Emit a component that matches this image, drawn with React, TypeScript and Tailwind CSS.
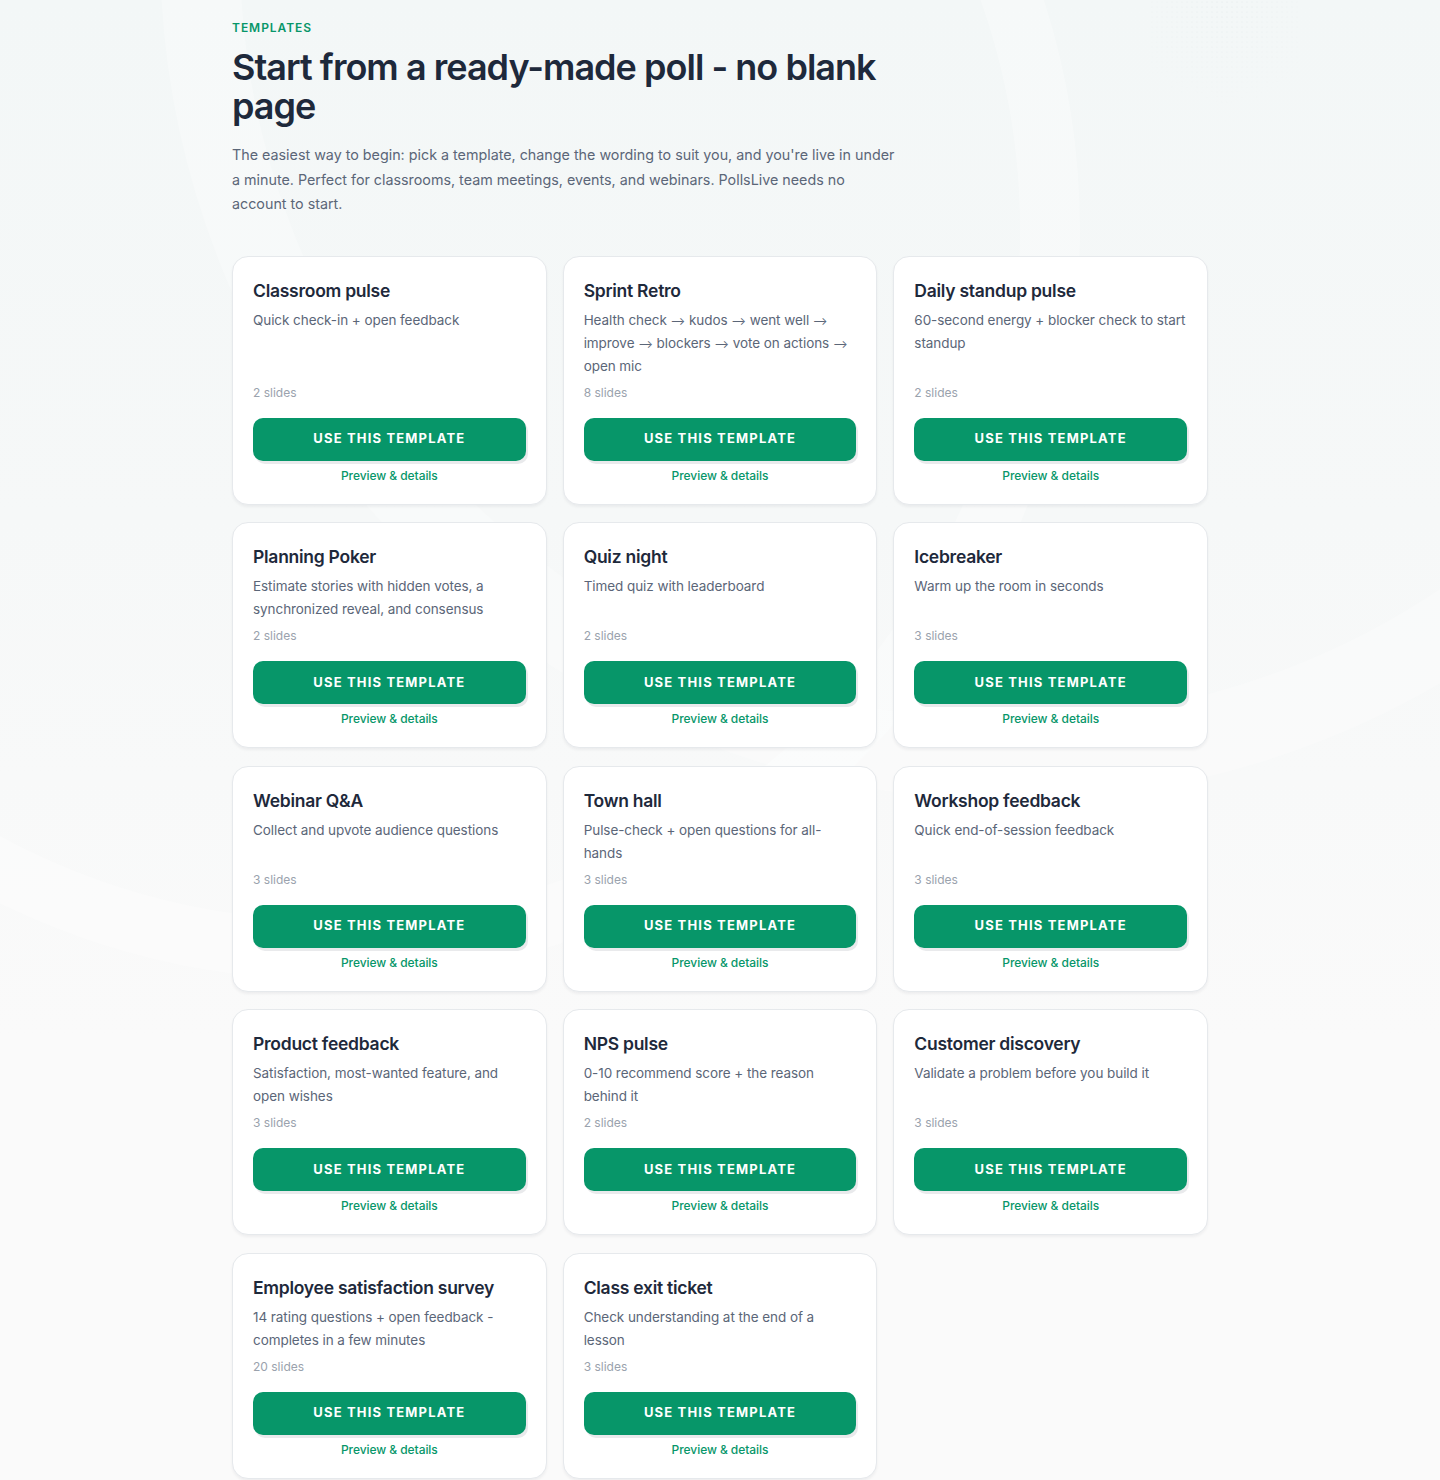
import React from "react";

type Template = {
	title: string;
	description: string;
	slides: number;
};

const templates: Template[] = [
	{ title: "Classroom pulse", description: "Quick check-in + open feedback", slides: 2 },
	{
		title: "Sprint Retro",
		description:
			"Health check \u27F6 kudos \u27F6 went well \u27F6 improve \u27F6 blockers \u27F6 vote on actions \u27F6 open mic",
		slides: 8,
	},
	{
		title: "Daily standup pulse",
		description: "60-second energy + blocker check to start standup",
		slides: 2,
	},
	{
		title: "Planning Poker",
		description: "Estimate stories with hidden votes, a synchronized reveal, and consensus",
		slides: 2,
	},
	{ title: "Quiz night", description: "Timed quiz with leaderboard", slides: 2 },
	{ title: "Icebreaker", description: "Warm up the room in seconds", slides: 3 },
	{ title: "Webinar Q&A", description: "Collect and upvote audience questions", slides: 3 },
	{ title: "Town hall", description: "Pulse-check + open questions for all-hands", slides: 3 },
	{ title: "Workshop feedback", description: "Quick end-of-session feedback", slides: 3 },
	{
		title: "Product feedback",
		description: "Satisfaction, most-wanted feature, and open wishes",
		slides: 3,
	},
	{ title: "NPS pulse", description: "0-10 recommend score + the reason behind it", slides: 2 },
	{
		title: "Customer discovery",
		description: "Validate a problem before you build it",
		slides: 3,
	},
	{
		title: "Employee satisfaction survey",
		description: "14 rating questions + open feedback - completes in a few minutes",
		slides: 20,
	},
	{
		title: "Class exit ticket",
		description: "Check understanding at the end of a lesson",
		slides: 3,
	},
];

// long arrows read a touch smaller in the source font
function Description({ text }: { text: string }) {
	const parts = text.split("\u27F6");
	return (
		<>
			{parts.map((part, i) => (
				<React.Fragment key={i}>
					{part}
					{i < parts.length - 1 && (
						<span className="text-[11px] leading-none">{"\u27F6"}</span>
					)}
				</React.Fragment>
			))}
		</>
	);
}

function TemplateCard({ template }: { template: Template }) {
	return (
		<div className="flex flex-col rounded-2xl border border-[#e6e9ec] bg-white p-5 shadow-[0_2px_3px_rgba(15,23,42,0.05)]">
			{/* Text */}
			<h3 className="text-[17.5px] leading-7 font-semibold tracking-[-0.015em] text-[#1e293b]">
				{template.title}
			</h3>
			<p className="mt-1 flex-1 text-[13.5px] leading-[23px] tracking-[-0.005em] text-[#5b6678]">
				<Description text={template.description} />
			</p>
			<p className="mt-[7px] text-[12px] leading-4 text-[#9aa2ad]">
				{template.slides} slides
			</p>

			{/* Actions */}
			<button
				type="button"
				className="mt-[17px] h-[43px] w-full rounded-[10px] bg-[#079669] text-[13px] font-bold tracking-[0.09em] text-white shadow-[2px_3px_0_rgba(15,23,42,0.09)]"
			>
				USE THIS TEMPLATE
			</button>
			<a
				href="#"
				className="mt-[7px] block text-center text-[12px] leading-4 font-medium tracking-[-0.005em] text-[#079669]"
			>
				Preview &amp; details
			</a>
		</div>
	);
}

export default function App() {
	return (
		<div
			className="relative min-h-[1480px] overflow-hidden bg-[linear-gradient(180deg,#f3f7f7_0%,#f6f8f8_35%,#fafafa_70%,#fafafa_100%)]"
			style={{ fontFamily: "Inter, 'Noto Sans', sans-serif" }}
		>
			{/* Background decoration */}
			<div className="pointer-events-none absolute inset-0">
				<div className="absolute -left-[420px] -top-[520px] h-[1500px] w-[1500px] rounded-full border-[60px] border-white/30" />
				<div className="absolute left-[160px] -top-[900px] h-[1700px] w-[1700px] rounded-full border-[80px] border-white/25" />
				<svg
					className="absolute left-[1150px] top-0 h-[150px] w-[150px] opacity-50"
					viewBox="0 0 150 150"
				>
					<defs>
						<pattern id="dots" width="5" height="5" patternUnits="userSpaceOnUse">
							<circle cx="2" cy="2" r="0.6" fill="#cbd5d8" />
						</pattern>
						<radialGradient id="fade" cx="50%" cy="0%" r="70%">
							<stop offset="0%" stopColor="white" stopOpacity="1" />
							<stop offset="100%" stopColor="white" stopOpacity="0" />
						</radialGradient>
						<mask id="m">
							<rect width="150" height="150" fill="url(#fade)" />
						</mask>
					</defs>
					<rect width="150" height="150" fill="url(#dots)" mask="url(#m)" />
				</svg>
			</div>

			<div className="relative mx-auto w-[976px] pt-5 pb-1">
				{/* Header */}
				<p className="text-[12px] leading-4 font-semibold tracking-[0.08em] text-[#079669]">
					TEMPLATES
				</p>
				<h1 className="mt-[12px] max-w-[672px] text-[36px] leading-[39px] font-semibold tracking-[-0.027em] text-[#1e293b]">
					Start from a ready-made poll - no blank page
				</h1>
				<p className="mt-[17px] max-w-[666px] text-[14.3px] leading-[24.5px] text-[#5b6678]">
					The easiest way to begin: pick a template, change the wording to suit you, and
					you're live in under a minute. Perfect for classrooms, team meetings, events,
					and webinars. PollsLive needs no account to start.
				</p>

				{/* Grid */}
				<div className="mt-[39px] grid grid-cols-3 gap-x-4 gap-y-[17.5px]">
					{templates.map((t) => (
						<TemplateCard key={t.title} template={t} />
					))}
				</div>
			</div>
		</div>
	);
}
